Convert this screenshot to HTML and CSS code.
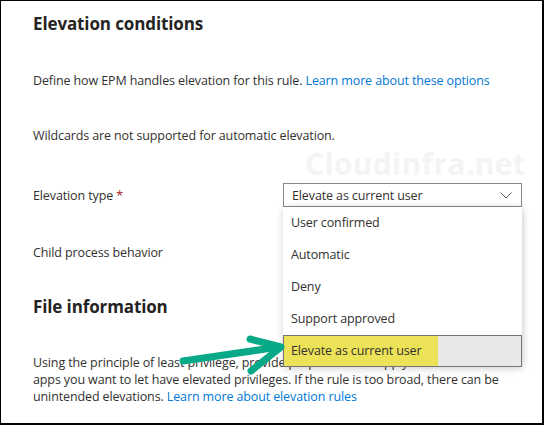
FILE: index.html
```html
<!DOCTYPE html>
<html lang="en">
<head>
<meta charset="utf-8">
<title>Elevation conditions</title>
<link rel="stylesheet" href="styles.css">
</head>
<body>
<div class="frame">
  <div class="watermark">Cloudinfra.net</div>
  <h2 class="title">Elevation conditions</h2>
  <p class="desc">Define how EPM handles elevation for this rule. <a class="link" href="#">Learn more about these options</a></p>
  <p class="note">Wildcards are not supported for automatic elevation.</p>
  <div class="row row-type">
    <div class="label">Elevation type <span class="req">*</span></div>
    <div class="select-wrap">
      <div class="select">
        <span class="select-value">Elevate as current user</span>
        <svg class="chevron" width="12" height="7" viewBox="0 0 12 7"><path d="M0.5 0.5 L6 6 L11.5 0.5" fill="none" stroke="#605e5c" stroke-width="1"/></svg>
      </div>
      <ul class="menu">
        <li class="item">User confirmed</li>
        <li class="item">Automatic</li>
        <li class="item">Deny</li>
        <li class="item">Support approved</li>
        <li class="item item-active">Elevate as current user</li>
      </ul>
    </div>
  </div>
  <div class="row row-child">
    <div class="label">Child process behavior</div>
  </div>
  <h2 class="title title-file">File information</h2>
  <p class="para">Using the principle of least privilege, provide properties that apply to the trusted<br>apps you want to let have elevated privileges. If the rule is too broad, there can be<br>unintended elevations. <a class="link" href="#">Learn more about elevation rules</a></p>
  <svg class="arrow" width="544" height="425" viewBox="0 0 544 425">
    <g fill="none" stroke="#08a986" stroke-width="7" stroke-linecap="round" stroke-linejoin="round">
      <path d="M183 361 L279 347"/>
      <path d="M250 339 L281 347 L251 371"/>
    </g>
  </svg>
</div>
</body>
</html>
```
FILE: styles.css
```css
* { box-sizing: border-box; }
html, body { margin: 0; padding: 0; background: #fff; }
body {
  font-family: "Open Sans", "Noto Sans", sans-serif;
  font-size: 12.5px;
  letter-spacing: -0.12px;
  color: #323130;
}
.frame {
  position: relative;
  width: 544px;
  height: 425px;
  border: 1px solid #000;
  border-right-width: 2px;
  border-bottom-width: 2px;
  padding-left: 32px;
  overflow: hidden;
}
.watermark {
  position: absolute;
  left: 304px;
  top: 145px;
  font-size: 30px;
  font-weight: 700;
  color: #f4f4f4;
  line-height: 36px;
  letter-spacing: 0.3px;
}
.title {
  margin: 0;
  height: 46px;
  line-height: 46px;
  font-size: 17px;
  font-weight: 700;
  color: #252423;
}
.desc, .note {
  position: relative;
  margin: 0;
  line-height: 20px;
}
.desc { padding-top: 24px; height: 66px; }
.note { padding-top: 13px; height: 46px; }
.link { color: #0078d4; text-decoration: none; }
.row {
  position: relative;
  display: grid;
  grid-template-columns: 250px 239px;
  align-items: center;
}
.row-type { height: 72px; z-index: 2; }
.row-child { height: 42px; }
.req { color: #a4262c; }
.select-wrap { position: relative; }
.select {
  display: flex;
  align-items: center;
  justify-content: space-between;
  height: 24px;
  border: 1px solid #8a8886;
  padding: 0 9px 0 8px;
  background: #fff;
}
.chevron { display: block; }
.menu {
  position: absolute;
  top: 24px;
  left: 0;
  width: 239px;
  margin: 0;
  padding: 0;
  list-style: none;
  background: #fff;
  box-shadow: 0 2px 8px rgba(0,0,0,0.14), 2px 0 6px rgba(0,0,0,0.08);
}
.item {
  height: 32px;
  line-height: 32px;
  padding-left: 8px;
}
.item-active {
  border: 1px solid #767676;
  padding-left: 7px;
  line-height: 30px;
  background: linear-gradient(to right, #ece257 0, #ece257 154px, #e9e8e7 154px);
}
.title-file { height: 68px; line-height: 68px; }
.para {
  position: relative;
  margin: 13px 0 0;
  line-height: 17px;
}
.arrow {
  position: absolute;
  left: -1px;
  top: -1px;
  z-index: 3;
  pointer-events: none;
}
```
